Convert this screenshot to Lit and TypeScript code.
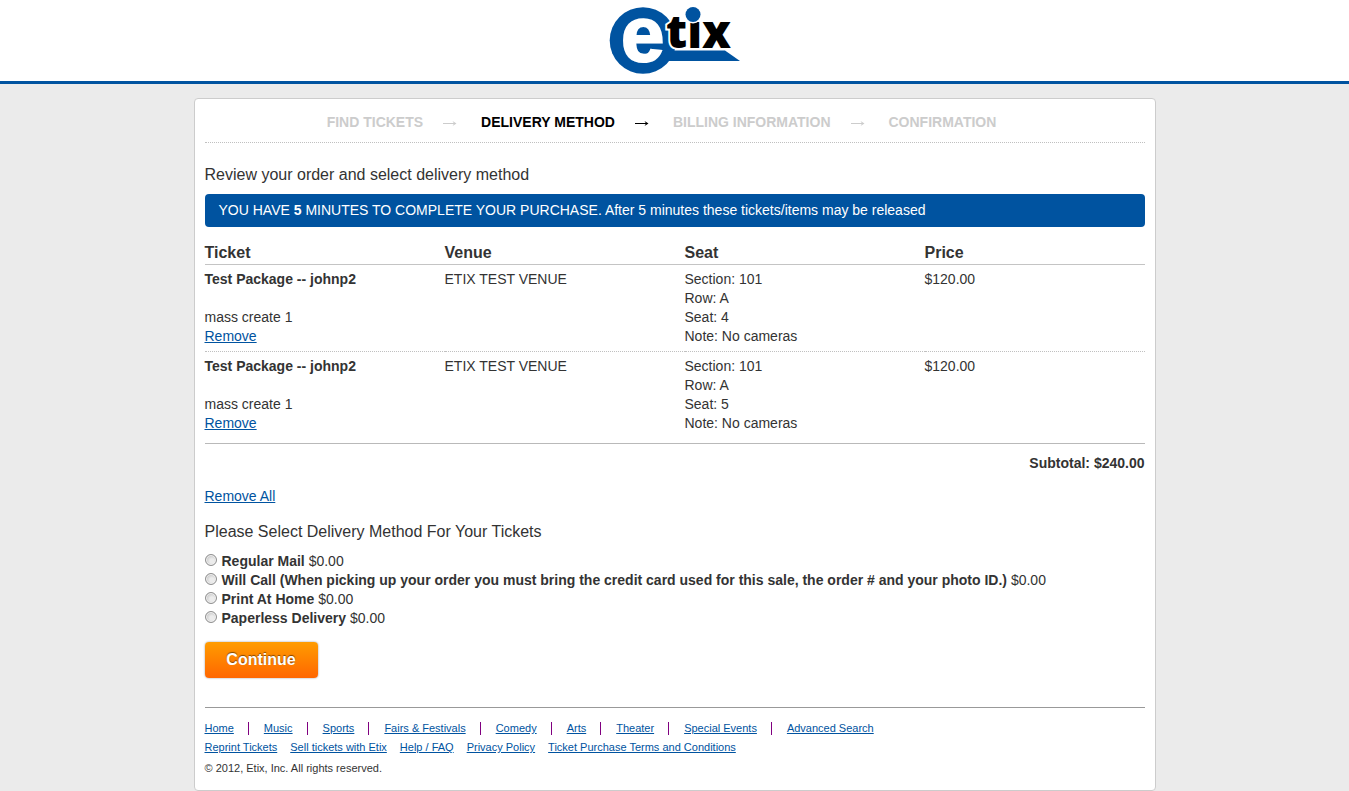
import { LitElement, html, css, svg } from "lit";
import { customElement, property, state } from "lit/decorators.js";
import { classMap } from "lit/directives/class-map.js";

interface Ticket {
  name: string;
  priceCode: string;
  venue: string;
  section: string;
  row: string;
  seat: string;
  note: string;
  price: string;
}

interface DeliveryMethod {
  id: string;
  label: string;
  fee: string;
}

const STEPS = ["Find Tickets", "Delivery Method", "Billing Information", "Confirmation"];

const CATEGORIES = [
  "Home",
  "Music",
  "Sports",
  "Fairs & Festivals",
  "Comedy",
  "Arts",
  "Theater",
  "Special Events",
  "Advanced Search",
];

const HELP_LINKS = [
  "Reprint Tickets",
  "Sell tickets with Etix",
  "Help / FAQ",
  "Privacy Policy",
  "Ticket Purchase Terms and Conditions",
];

const TICKETS: Ticket[] = ["4", "5"].map((seat) => ({
  name: "Test Package -- johnp2",
  priceCode: "mass create 1",
  venue: "ETIX TEST VENUE",
  section: "101",
  row: "A",
  seat,
  note: "No cameras",
  price: "$120.00",
}));

const METHODS: DeliveryMethod[] = [
  { id: "mail", label: "Regular Mail", fee: "$0.00" },
  {
    id: "will-call",
    label:
      "Will Call (When picking up your order you must bring the credit card used for this sale, the order # and your photo ID.)",
    fee: "$0.00",
  },
  { id: "print", label: "Print At Home", fee: "$0.00" },
  { id: "paperless", label: "Paperless Delivery", fee: "$0.00" },
];

@customElement("site-header")
class SiteHeader extends LitElement {
  static styles = css`
    :host {
      display: block;
      background: #fff;
      border-bottom: 3px solid #0053a0;
    }
    .logo-link {
      display: flex;
      justify-content: center;
      padding: 5px 0 6px;
    }
    .logo {
      display: block;
      width: 132px;
      height: 70px;
      overflow: visible;
    }
    .blue {
      fill: #0053a0;
    }
    .big-e {
      font: bold 78px "Liberation Sans", Arial, sans-serif;
      fill: #fff;
      stroke: #fff;
      stroke-width: 2;
    }
    .word {
      font: 800 46px "Open Sans", Arial, sans-serif;
      fill: #000;
      stroke: #fff;
      stroke-width: 4;
      paint-order: stroke;
    }
  `;

  render() {
    return html`
      <a class="logo-link" href="#" aria-label="Etix home">
        <svg class="logo" viewBox="609 5 132 70" role="img" aria-label="etix">
          <circle class="blue" cx="643" cy="40.5" r="33.3" />
          <path class="blue" d="M662 50.5H725L740 61H662Z" />
          <text class="big-e" x="621" y="61">e</text>
          <text class="word" x="666" y="48">tix</text>
          <circle cx="693" cy="14.5" r="9" fill="#fff" />
          <circle class="blue" cx="693" cy="14.5" r="7.5" />
        </svg>
      </a>
    `;
  }
}

@customElement("checkout-steps")
class CheckoutSteps extends LitElement {
  @property({ type: Number }) current = 0;

  static styles = css`
    :host {
      display: block;
      border-bottom: 1px dotted #c0c0c0;
    }
    .steps {
      display: flex;
      justify-content: center;
      margin: 0;
      padding: 13px 26px 10px 0;
      list-style: none;
      gap: 24px;
      font-size: 14px;
      line-height: 20px;
      font-weight: bold;
      text-transform: uppercase;
      color: #ccc;
    }
    .step {
      display: flex;
      align-items: center;
      gap: 20px;
    }
    .active {
      color: #000;
    }
    .arrow {
      display: block;
      width: 14px;
      height: 20px;
    }
  `;

  render() {
    return html`
      <ol class="steps">
        ${STEPS.map(
          (step, i) => html`
            <li
              class=${classMap({ step: true, active: i === this.current })}
              aria-current=${i === this.current ? "step" : "false"}
            >
              <span>${step}</span>
              ${i < STEPS.length - 1
                ? html`<svg class="arrow" viewBox="0 0 14 20" aria-hidden="true">
                    ${svg`<path d="M0 11.5H12" stroke="currentColor" fill="none" />
                    <path d="M9.5 9L13.5 11.5L9.5 14L11 11.5Z" fill="currentColor" />`}
                  </svg>`
                : null}
            </li>
          `,
        )}
      </ol>
    `;
  }
}

@customElement("order-table")
class OrderTable extends LitElement {
  @property({ attribute: false }) tickets: Ticket[] = [];

  static styles = css`
    .table {
      width: 100%;
      border-collapse: separate;
      border-spacing: 0;
      table-layout: fixed;
      border-bottom: 1px solid #b9b9b9;
      padding-bottom: 5px;
    }
    .col {
      width: 240px;
    }
    .head {
      padding: 5px 0 1px;
      border-bottom: 1px solid #c4c4c4;
      font-size: 16px;
      line-height: 20px;
      text-align: left;
    }
    .cell {
      padding: 5px 0;
      vertical-align: top;
    }
    .row + .row .cell {
      border-top: 1px dotted #c0c0c0;
    }
    .code {
      display: block;
      margin-top: 19px;
    }
    .line {
      display: block;
    }
    .link {
      color: #0053a0;
    }
  `;

  render() {
    return html`
      <table class="table">
        <colgroup>
          <col class="col" />
          <col class="col" />
          <col class="col" />
          <col />
        </colgroup>
        <thead>
          <tr>
            ${["Ticket", "Venue", "Seat", "Price"].map(
              (name) => html`<th class="head" scope="col">${name}</th>`,
            )}
          </tr>
        </thead>
        <tbody>
          ${this.tickets.map(
            (t) => html`
              <tr class="row">
                <td class="cell">
                  <strong>${t.name}</strong>
                  <span class="code">${t.priceCode}</span>
                  <a class="link" href="#">Remove</a>
                </td>
                <td class="cell">${t.venue}</td>
                <td class="cell">
                  <span class="line">Section: ${t.section}</span>
                  <span class="line">Row: ${t.row}</span>
                  <span class="line">Seat: ${t.seat}</span>
                  <span class="line">Note: ${t.note}</span>
                </td>
                <td class="cell">${t.price}</td>
              </tr>
            `,
          )}
        </tbody>
      </table>
    `;
  }
}

@customElement("delivery-form")
class DeliveryForm extends LitElement {
  @state() private selected = "";

  static styles = css`
    .group {
      display: flex;
      flex-direction: column;
      margin: 0;
      padding: 0;
      border: 0;
    }
    .legend {
      padding: 0;
      margin-bottom: 10px;
      font-size: 16px;
      line-height: 20px;
    }
    .option {
      display: flex;
      align-items: flex-start;
      gap: 5px;
    }
    .radio {
      appearance: none;
      flex: none;
      box-sizing: border-box;
      width: 12px;
      height: 12px;
      margin: 2px 0 0;
      border: 1px solid #8f8f8f;
      border-radius: 50%;
      background: radial-gradient(circle at 60% 60%, #ececec 0 25%, #c4c4c4 75%);
      box-shadow: inset 0 0 0 1px #f2f2f2;
    }
    .radio:checked {
      background: radial-gradient(circle, #333 0 35%, #ddd 45%);
    }
    .submit {
      display: block;
      min-width: 113px;
      margin-top: 14px;
      padding: 8px 20px;
      border: 0;
      border-radius: 4px;
      background: linear-gradient(#ff9c00, #ff6600);
      box-shadow: 0 0 2px rgba(0, 0, 0, 0.45);
      color: #fff;
      font: bold 16px/20px "Liberation Sans", Arial, sans-serif;
      text-shadow: 0 -1px 1px rgba(0, 0, 0, 0.5);
      cursor: pointer;
    }
  `;

  render() {
    return html`
      <form @submit=${(e: Event) => e.preventDefault()}>
        <fieldset class="group">
          <legend class="legend">Please Select Delivery Method For Your Tickets</legend>
          ${METHODS.map(
            (m) => html`
              <label class="option" for=${m.id}>
                <input
                  class="radio"
                  type="radio"
                  name="delivery"
                  id=${m.id}
                  .checked=${this.selected === m.id}
                  @change=${() => (this.selected = m.id)}
                />
                <span><strong>${m.label}</strong> ${m.fee}</span>
              </label>
            `,
          )}
        </fieldset>
        <button class="submit" type="submit">Continue</button>
      </form>
    `;
  }
}

@customElement("site-footer")
class SiteFooter extends LitElement {
  static styles = css`
    :host {
      display: block;
      border-top: 1px solid #999;
      padding: 11px 0 12px;
      font-size: 11px;
      line-height: 19px;
    }
    .list {
      display: flex;
      flex-wrap: wrap;
      margin: 0;
      padding: 0;
      list-style: none;
    }
    .categories {
      align-items: center;
      column-gap: 15px;
    }
    .category {
      display: flex;
      align-items: center;
      gap: 14px;
    }
    .category:not(:last-child)::after {
      content: "";
      width: 1px;
      height: 13px;
      background: #800080;
    }
    .help {
      column-gap: 13px;
    }
    .copyright {
      margin: 2px 0 0;
    }
    .link {
      color: #0053a0;
    }
  `;

  render() {
    return html`
      <ul class="list categories">
        ${CATEGORIES.map(
          (name) => html`<li class="category"><a class="link" href="#">${name}</a></li>`,
        )}
      </ul>
      <ul class="list help">
        ${HELP_LINKS.map((name) => html`<li><a class="link" href="#">${name}</a></li>`)}
      </ul>
      <p class="copyright">© 2012, Etix, Inc. All rights reserved.</p>
    `;
  }
}

@customElement("app-root")
class AppRoot extends LitElement {
  static styles = css`
    :host {
      display: block;
      min-height: 100vh;
      background: #ebebeb;
      color: #333;
      font: 14px/19px "Liberation Sans", Arial, sans-serif;
    }
    .card {
      box-sizing: border-box;
      max-width: 962px;
      margin: 14px auto 0;
      padding: 0 10px;
      border: 1px solid #ccc;
      border-radius: 4px;
      background: #fff;
    }
    .title {
      margin: 22px 0 9px;
      font-size: 16px;
      line-height: 20px;
      font-weight: normal;
    }
    .notice {
      margin: 0 0 11px;
      padding: 7px 14px;
      border-radius: 4px;
      background: #0053a0;
      color: #fff;
    }
    .subtotal {
      margin: 10px 0 14px;
      text-align: right;
      font-weight: bold;
    }
    .remove-all {
      margin: 0 0 16px;
    }
    .link {
      color: #0053a0;
    }
    .footer {
      margin-top: 29px;
    }
  `;

  render() {
    return html`
      <site-header></site-header>
      <main class="card">
        <checkout-steps .current=${1}></checkout-steps>
        <h1 class="title">Review your order and select delivery method</h1>
        <p class="notice">
          YOU HAVE <strong>5</strong> MINUTES TO COMPLETE YOUR PURCHASE. After 5 minutes these
          tickets/items may be released
        </p>
        <order-table .tickets=${TICKETS}></order-table>
        <p class="subtotal">Subtotal: $240.00</p>
        <p class="remove-all"><a class="link" href="#">Remove All</a></p>
        <delivery-form></delivery-form>
        <site-footer class="footer"></site-footer>
      </main>
    `;
  }
}
